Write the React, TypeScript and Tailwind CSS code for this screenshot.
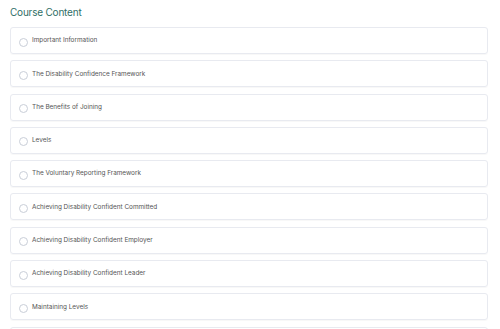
const ITEMS = [
  "Important Information",
  "The Disability Confidence Framework",
  "The Benefits of Joining",
  "Levels",
  "The Voluntary Reporting Framework",
  "Achieving Disability Confident Committed",
  "Achieving Disability Confident Employer",
  "Achieving Disability Confident Leader",
  "Maintaining Levels",
  "",
];

export default function App() {
  return (
    <div className="h-[329px] overflow-hidden bg-white px-[10px] pt-[5px] font-['Inter','Liberation_Sans',sans-serif]">
      <h2 className="text-[10px] text-[#2f6e66] font-normal leading-[14px] mb-[8px] tracking-[-0.2px]">
        Course Content
      </h2>
      <div className="w-[478px] flex flex-col gap-[6.3px]">
        {ITEMS.map((t, i) => (
          <div
            key={i}
            className="h-[27px] shrink-0 border border-[#e8eaf0] rounded-[3px] shadow-[0_1px_1px_rgba(0,0,0,0.03)] flex items-center pl-[8px]"
          >
            <span className="w-[9px] h-[9px] rounded-full border border-[#c9ced8] mt-[3px] mr-[4px] shrink-0" />
            <span className="text-[6.4px] text-[#555] leading-none">{t}</span>
          </div>
        ))}
      </div>
    </div>
  );
}
